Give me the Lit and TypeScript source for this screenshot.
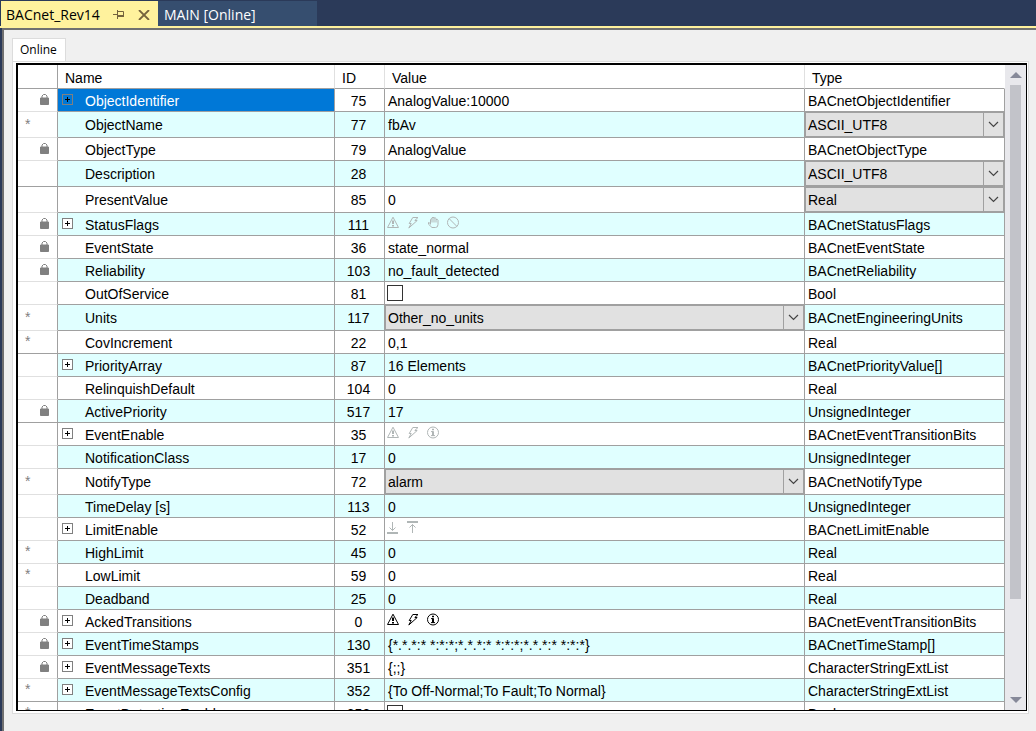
import { LitElement, html, css, svg, nothing } from "lit";
import { customElement, property, state } from "lit/decorators.js";
import { classMap } from "lit/directives/class-map.js";

type Flag = "alarm" | "fault" | "hand" | "blocked" | "info" | "low" | "high";

interface Row {
  mark?: "lock" | "star";
  name: string;
  id: number;
  expand?: boolean;
  value?: string;
  select?: boolean;
  check?: boolean;
  flags?: Flag[];
  active?: boolean;
  groupEnd?: boolean;
  type: string;
  typeSelect?: boolean;
}

const ROWS: Row[] = [
  { mark: "lock", name: "ObjectIdentifier", id: 75, expand: true, value: "AnalogValue:10000", type: "BACnetObjectIdentifier" },
  { mark: "star", name: "ObjectName", id: 77, value: "fbAv", type: "ASCII_UTF8", typeSelect: true },
  { mark: "lock", name: "ObjectType", id: 79, value: "AnalogValue", type: "BACnetObjectType" },
  { name: "Description", id: 28, value: "", type: "ASCII_UTF8", typeSelect: true, groupEnd: true },
  { name: "PresentValue", id: 85, value: "0", type: "Real", typeSelect: true },
  { mark: "lock", name: "StatusFlags", id: 111, expand: true, flags: ["alarm", "fault", "hand", "blocked"], type: "BACnetStatusFlags" },
  { mark: "lock", name: "EventState", id: 36, value: "state_normal", type: "BACnetEventState" },
  { mark: "lock", name: "Reliability", id: 103, value: "no_fault_detected", type: "BACnetReliability" },
  { name: "OutOfService", id: 81, check: true, type: "Bool" },
  { mark: "star", name: "Units", id: 117, value: "Other_no_units", select: true, type: "BACnetEngineeringUnits" },
  { mark: "star", name: "CovIncrement", id: 22, value: "0,1", type: "Real", groupEnd: true },
  { name: "PriorityArray", id: 87, expand: true, value: "16 Elements", type: "BACnetPriorityValue[]" },
  { name: "RelinquishDefault", id: 104, value: "0", type: "Real" },
  { mark: "lock", name: "ActivePriority", id: 517, value: "17", type: "UnsignedInteger", groupEnd: true },
  { name: "EventEnable", id: 35, expand: true, flags: ["alarm", "fault", "info"], type: "BACnetEventTransitionBits" },
  { name: "NotificationClass", id: 17, value: "0", type: "UnsignedInteger" },
  { mark: "star", name: "NotifyType", id: 72, value: "alarm", select: true, type: "BACnetNotifyType" },
  { name: "TimeDelay [s]", id: 113, value: "0", type: "UnsignedInteger" },
  { name: "LimitEnable", id: 52, expand: true, flags: ["low", "high"], type: "BACnetLimitEnable" },
  { mark: "star", name: "HighLimit", id: 45, value: "0", type: "Real" },
  { mark: "star", name: "LowLimit", id: 59, value: "0", type: "Real" },
  { name: "Deadband", id: 25, value: "0", type: "Real" },
  { mark: "lock", name: "AckedTransitions", id: 0, expand: true, flags: ["alarm", "fault", "info"], active: true, type: "BACnetEventTransitionBits" },
  { mark: "lock", name: "EventTimeStamps", id: 130, expand: true, value: "{*.*.*:* *:*:*;*.*.*:* *:*:*;*.*.*:* *:*:*}", type: "BACnetTimeStamp[]" },
  { mark: "lock", name: "EventMessageTexts", id: 351, expand: true, value: "{;;}", type: "CharacterStringExtList" },
  { mark: "star", name: "EventMessageTextsConfig", id: 352, expand: true, value: "{To Off-Normal;To Fault;To Normal}", type: "CharacterStringExtList", groupEnd: true },
  { mark: "star", name: "EventDetectionEnable", id: 353, check: true, type: "Bool" },
];

const SHAPES: Record<Flag, unknown> = {
  alarm: svg`<path d="M6 1.2 L11.5 11.5 H0.5 Z"/><path class="thick" d="M6 4.5 V8 M6 9 V10.5"/>`,
  fault: svg`<path d="M5.8 1.5 H11 L7.8 4.5 H10.2 L1.8 12 L4.2 7.5 H2.2 Z"/>`,
  hand: svg`<path d="M3.5 8.5 V3.5 Q4 2.2 5 3 V6.5 M5 3 V1.8 Q6 0.8 7 1.8 V6.5 M7 2 Q8.4 1.4 9 2.5 V6.5 M9 3.5 Q10.6 2.8 11 4.2 V8.5 Q11 11.5 8.5 11.5 H5 L1.5 8.2 V6.5 L3.5 7.5"/>`,
  blocked: svg`<circle cx="6" cy="6.5" r="5.5"/><path d="M2.1 2.6 L9.9 10.4"/>`,
  info: svg`<circle cx="6" cy="6.5" r="5.5"/><path class="thick" d="M6 2.8 V4.3 M6 5.3 V10"/><path d="M4 5.6 H6 M4 9.6 H8"/>`,
  low: svg`<path d="M5.5 1 V9.5 M2.5 6.5 L5.5 9.5 L8.5 6.5"/><path class="thick" d="M0 12 H11"/>`,
  high: svg`<path d="M5.5 12 V3.5 M2.5 6.5 L5.5 3.5 L8.5 6.5"/><path class="thick" d="M0 1 H11"/>`,
};

@customElement("flag-icon")
export class FlagIcon extends LitElement {
  @property() kind: Flag = "alarm";

  static styles = css`
    :host { display: block; width: 13px; height: 13px; }
    .icon { display: block; fill: none; stroke: currentColor; stroke-width: 1; }
    .thick { stroke-width: 2; }
  `;

  render() {
    return html`<svg class="icon" width="13" height="13" viewBox="0 0 13 13" aria-hidden="true">${SHAPES[this.kind]}</svg>`;
  }
}

@customElement("property-grid")
export class PropertyGrid extends LitElement {
  @state() private selected = 0;

  static styles = css`
    :host { display: flex; min-height: 0; flex: 1; }
    .grid { flex: 1; min-width: 0; display: flex; border: 2px solid #000; border-width: 2px 1px 1px 2px; background: #fff; overflow: hidden; }
    .rows { flex: 1; min-width: 0; overflow: hidden; }
    .table { width: 100%; table-layout: fixed; border-collapse: separate; border-spacing: 0; font: 14px/20px "Liberation Sans", Arial, sans-serif; color: #000; }
    .c-mark { width: 40px; }
    .c-name { width: 277px; }
    .c-id { width: 50px; }
    .c-type { width: 200px; }
    th { height: 20px; padding: 3px 0 0 7px; text-align: left; font-weight: 400; border-right: 1px solid #e0e0e0; border-bottom: 1px solid #a0a0a0; }
    th:first-child { border-right-color: #a0a0a0; }
    th:last-child { border-right-color: #fff; }
    td { height: 20px; padding: 2px 0 0 3px; border-right: 1px solid #a0a0a0; border-bottom: 1px solid #a0a0a0; white-space: nowrap; overflow: hidden; }
    .tall td { height: 21px; padding-bottom: 2px; }
    .alt td { background: #e0ffff; }
    td.mark { background: #fff; border-bottom-color: #e0e0e0; padding: 0 0 2px; }
    .group-end td.mark { border-bottom-color: #a0a0a0; }
    .marks { display: flex; align-items: center; height: 20px; padding: 0 8px 0 7px; color: #808080; }
    .marks.lock { justify-content: flex-end; }
    .star { line-height: 20px; }
    .lock-icon { display: block; }
    .name { display: grid; grid-template-columns: 24px 1fr; align-items: center; }
    td.id { text-align: center; padding-left: 0; padding-right: 2px; }
    .selected td.label { background: #0078d7; color: #fff; }
    .expand { box-sizing: border-box; width: 11px; height: 11px; margin: 0 0 4px 1px; padding: 0; border: 1px solid #808080; background: #fff; display: grid; place-items: center; }
    .selected .expand { background: transparent; }
    .flags { box-sizing: border-box; display: flex; gap: 7px; height: 20px; padding-top: 1px; margin-left: -1px; color: #b0b6b6; }
    .flags.active { color: #000; }
    .check { appearance: none; box-sizing: border-box; display: block; width: 16px; height: 16px; margin: 0 0 2px -1px; border: 1px solid #333; background: #fff; }
    .tall td.drop { padding: 0; height: 25px; }
    .combo { display: flex; height: 25px; border: 1px solid #a0a0a0; box-sizing: border-box; background: #e1e1e1; }
    .combo select { appearance: none; flex: 1; min-width: 0; border: 0; margin: 0; padding: 0 0 0 2px; background: transparent; font: inherit; color: #000; border-radius: 0; }
    .arrow { width: 19px; border-left: 1px solid #a0a0a0; display: grid; place-items: center; pointer-events: none; }
    .bar { width: 21px; display: flex; flex-direction: column; background: #e8e8ec; }
    .step { height: 20px; border: 0; padding: 0; background: transparent; display: grid; place-items: center; }
    .track { flex: 1; display: flex; justify-content: center; }
    .thumb { width: 11px; height: 85%; background: #c2c3c9; }
  `;

  private combo(label: string, value: string) {
    return html`<div class="combo">
      <select aria-label=${label}><option>${value}</option></select>
      <span class="arrow"><svg width="11" height="7" viewBox="0 0 11 7"><path d="M1 1 L5.5 5.5 L10 1" fill="none" stroke="#444" stroke-width="1.2"/></svg></span>
    </div>`;
  }

  private value(r: Row) {
    if (r.select) return this.combo(`${r.name} value`, r.value ?? "");
    if (r.check) return html`<input class="check" type="checkbox" aria-label=${r.name} />`;
    if (r.flags)
      return html`<div class=${classMap({ flags: true, active: !!r.active })}>${r.flags.map((f) => html`<flag-icon .kind=${f}></flag-icon>`)}</div>`;
    return r.value;
  }

  private mark(r: Row) {
    if (r.mark === "lock")
      return html`<div class="marks lock"><svg class="lock-icon" width="9" height="11" viewBox="0 0 9 11" aria-label="Read only"><path d="M0.5 4 H8.5 V10.5 H0.5 Z" fill="#808080" stroke="#808080"/><path d="M2 4 V2 L3.5 0.5 H5.5 L7 2 V4" fill="none" stroke="#808080"/></svg></div>`;
    if (r.mark === "star") return html`<div class="marks"><span class="star">*</span></div>`;
    return html`<div class="marks"></div>`;
  }

  private row(r: Row, i: number) {
    const cls = {
      alt: i % 2 === 1,
      tall: !!(r.select || r.typeSelect),
      selected: i === this.selected,
      "group-end": !!r.groupEnd,
    };
    return html`<tr class=${classMap(cls)} @click=${() => (this.selected = i)}>
      <td class="mark">${this.mark(r)}</td>
      <td class="label"><div class="name">
        <span>${r.expand
          ? html`<button class="expand" aria-label="Expand ${r.name}"><svg width="5" height="5" viewBox="0 0 5 5"><path d="M0 2.5 H5 M2.5 0 V5" stroke="#000"/></svg></button>`
          : nothing}</span>
        <span>${r.name}</span>
      </div></td>
      <td class="id">${r.id}</td>
      <td class=${classMap({ drop: !!r.select })}>${this.value(r)}</td>
      <td class=${classMap({ drop: !!r.typeSelect })}>${r.typeSelect ? this.combo(`${r.name} type`, r.type) : r.type}</td>
    </tr>`;
  }

  render() {
    return html`<div class="grid">
      <div class="rows">
        <table class="table">
          <colgroup><col class="c-mark" /><col class="c-name" /><col class="c-id" /><col /><col class="c-type" /></colgroup>
          <thead><tr><th></th><th>Name</th><th>ID</th><th>Value</th><th>Type</th></tr></thead>
          <tbody>${ROWS.map((r, i) => this.row(r, i))}</tbody>
        </table>
      </div>
      <div class="bar">
        <button class="step" aria-label="Scroll up"><svg width="12" height="6" viewBox="0 0 12 6"><path d="M0 6 L6 0 L12 6 Z" fill="#868999"/></svg></button>
        <div class="track"><div class="thumb"></div></div>
        <button class="step" aria-label="Scroll down"><svg width="12" height="6" viewBox="0 0 12 6"><path d="M0 0 L6 6 L12 0 Z" fill="#868999"/></svg></button>
      </div>
    </div>`;
  }
}

@customElement("app-root")
export class AppRoot extends LitElement {
  static styles = css`
    :host { display: flex; flex-direction: column; height: 100vh; background: #2b3a59; font-family: "Open Sans", "Noto Sans", sans-serif; }
    .tabs { display: flex; height: 25px; padding: 1px 0 0 1px; border-bottom: 2px solid #fff29d; }
    .tab { box-sizing: border-box; display: flex; align-items: center; border: 0; margin: 0; padding: 2px 6px 0; font: inherit; font-size: 14px; line-height: 20px; color: #fff; background: #364e6f; }
    .tab.other { width: 159px; }
    .tab.current { width: 157px; padding-left: 5px; background: #fff29d; color: #000; gap: 13px; }
    .tool { border: 0; padding: 0; background: transparent; display: block; }
    .tool svg { display: block; }
    .page { flex: 1; min-height: 0; display: flex; flex-direction: column; margin-left: 2px; padding: 8px 7px 17px 8px; border-top: 2px solid #707070; border-left: 2px solid #707070; background: #f0f0f0; }
    .inner { align-self: flex-start; height: 23px; padding: 0 8px 0 7px; border: 1px solid #dcdcdc; border-bottom: 0; background: #fff; font: inherit; font-size: 12px; line-height: 20px; color: #000; }
    .panel { flex: 1; min-height: 0; display: flex; padding: 1px 1px 2px 3px; border: 1px solid #dcdcdc; background: #fff; }
  `;

  render() {
    return html`
      <nav class="tabs">
        <div class="tab current">
          <span>BACnet_Rev14</span>
          <button class="tool" aria-label="Pin"><svg width="12" height="9" viewBox="0 0 12 9"><path d="M0 4.5 H4 M4.5 0 V9 M4.5 1.5 H10.5 V6.5 H4.5" fill="none" stroke="#75633d"/><path d="M4 6 H11" stroke="#75633d" stroke-width="2"/></svg></button>
          <button class="tool" aria-label="Close"><svg width="12" height="10" viewBox="0 0 12 10"><path d="M1 0 L11 10 M11 0 L1 10" stroke="#75633d" stroke-width="1.8"/></svg></button>
        </div>
        <button class="tab other">MAIN [Online]</button>
      </nav>
      <main class="page">
        <button class="inner">Online</button>
        <div class="panel"><property-grid></property-grid></div>
      </main>
    `;
  }
}
